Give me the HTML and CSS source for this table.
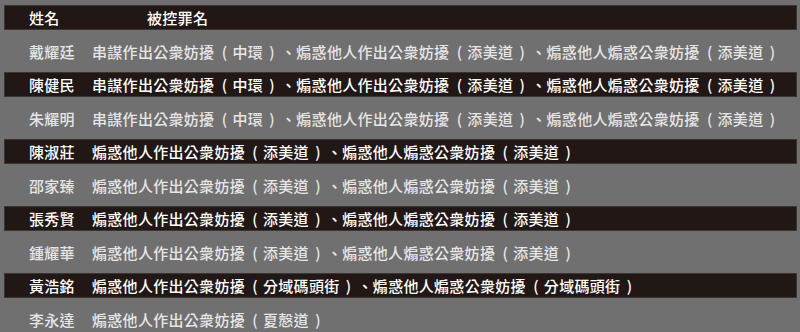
FILE: index.html
```html
<!DOCTYPE html>
<html lang="zh-Hant">
<head>
<meta charset="utf-8">
<link rel="stylesheet" href="styles.css">
</head>
<body>
<div class="table">
  <div class="row dark head">
    <div class="name">姓名</div>
    <div class="charge hcharge">被控罪名</div>
  </div>
  <div class="row">
    <div class="name">戴耀廷</div>
    <div class="charge">串謀作出公衆妨擾<span class="lp">(</span>中環<span class="rp">)</span>、煽惑他人作出公衆妨擾<span class="lp">(</span>添美道<span class="rp">)</span>、煽惑他人煽惑公衆妨擾<span class="lp">(</span>添美道<span class="rp">)</span></div>
  </div>
  <div class="row dark">
    <div class="name">陳健民</div>
    <div class="charge">串謀作出公衆妨擾<span class="lp">(</span>中環<span class="rp">)</span>、煽惑他人作出公衆妨擾<span class="lp">(</span>添美道<span class="rp">)</span>、煽惑他人煽惑公衆妨擾<span class="lp">(</span>添美道<span class="rp">)</span></div>
  </div>
  <div class="row">
    <div class="name">朱耀明</div>
    <div class="charge">串謀作出公衆妨擾<span class="lp">(</span>中環<span class="rp">)</span>、煽惑他人作出公衆妨擾<span class="lp">(</span>添美道<span class="rp">)</span>、煽惑他人煽惑公衆妨擾<span class="lp">(</span>添美道<span class="rp">)</span></div>
  </div>
  <div class="row dark">
    <div class="name">陳淑莊</div>
    <div class="charge">煽惑他人作出公衆妨擾<span class="lp">(</span>添美道<span class="rp">)</span>、煽惑他人煽惑公衆妨擾<span class="lp">(</span>添美道<span class="rp">)</span></div>
  </div>
  <div class="row">
    <div class="name">邵家臻</div>
    <div class="charge">煽惑他人作出公衆妨擾<span class="lp">(</span>添美道<span class="rp">)</span>、煽惑他人煽惑公衆妨擾<span class="lp">(</span>添美道<span class="rp">)</span></div>
  </div>
  <div class="row dark">
    <div class="name">張秀賢</div>
    <div class="charge">煽惑他人作出公衆妨擾<span class="lp">(</span>添美道<span class="rp">)</span>、煽惑他人煽惑公衆妨擾<span class="lp">(</span>添美道<span class="rp">)</span></div>
  </div>
  <div class="row">
    <div class="name">鍾耀華</div>
    <div class="charge">煽惑他人作出公衆妨擾<span class="lp">(</span>添美道<span class="rp">)</span>、煽惑他人煽惑公衆妨擾<span class="lp">(</span>添美道<span class="rp">)</span></div>
  </div>
  <div class="row dark">
    <div class="name">黃浩銘</div>
    <div class="charge">煽惑他人作出公衆妨擾<span class="lp">(</span>分域碼頭街<span class="rp">)</span>、煽惑他人煽惑公衆妨擾<span class="lp">(</span>分域碼頭街<span class="rp">)</span></div>
  </div>
  <div class="row">
    <div class="name">李永達</div>
    <div class="charge">煽惑他人作出公衆妨擾<span class="lp">(</span>夏慤道<span class="rp">)</span></div>
  </div>
</div>
</body>
</html>
```

FILE: styles.css
```css
html, body {
  margin: 0;
  padding: 0;
  background: #707070;
}

body {
  font-family: "Noto Sans CJK TC", "Noto Sans CJK SC", sans-serif;
  font-size: 15px;
  font-weight: 500;
  color: #e6e6e6;
}

.table {
  display: flex;
  flex-direction: column;
  gap: 8.5px;
  padding: 5px 3px 0 4px;
}

.row {
  display: flex;
  align-items: center;
  height: 25px;
  line-height: 25px;
  box-sizing: border-box;
  border: 1px solid transparent;
  white-space: nowrap;
  letter-spacing: 0.3px;
}

.row.dark {
  background: #211816;
  border-color: #3a3433;
  color: #ffffff;
}

.name {
  width: 63px;
  padding-left: 24px;
  flex: none;
}

.charge {
  flex: 1;
}

.hcharge {
  padding-left: 55px;
}

.lp, .rp {
  display: inline-block;
  width: 18px;
  text-align: center;
  letter-spacing: 0;
}

.lp {
  padding-left: 2px;
  box-sizing: border-box;
}
```
